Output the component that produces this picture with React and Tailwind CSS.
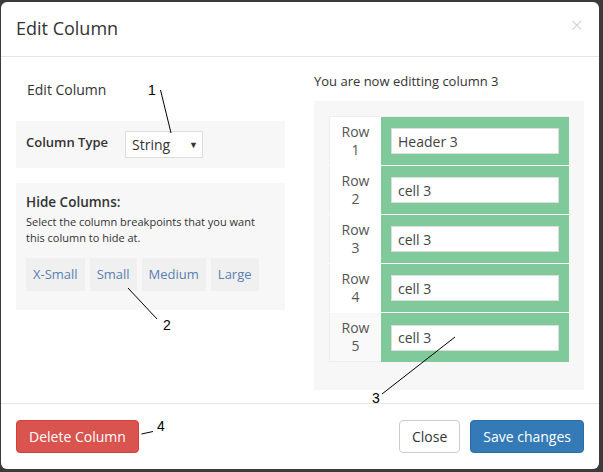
import React from "react";

const font = { fontFamily: '"Open Sans", "Noto Sans", sans-serif' };

function Row({ n, value, last }) {
  return (
    <div className={`flex h-[49px] ${last ? "" : "border-b border-white"}`}>
      <div className={`w-[52px] flex flex-col items-center justify-center text-[14px] leading-[18px] text-[#555] border-l border-[#eee] ${last ? "bg-[#f9f9f9] border-b" : "bg-white"}`}>
        <span>Row</span>
        <span>{n}</span>
      </div>
      <div className="flex-1 bg-[#80c99b] flex items-center px-[10px]">
        <div className="w-full h-[26px] bg-white border border-[#ddd] flex items-center px-[6px] text-[14px] text-[#444]">
          {value}
        </div>
      </div>
    </div>
  );
}

export default function App() {
  return (
    <div className="w-[603px] h-[472px] bg-[#3b3b3b] relative overflow-hidden" style={font}>
      <div className="absolute left-[1px] top-[2px] w-[598px] h-[467px] bg-white rounded-[6px] flex flex-col text-[#333]">
        {/* header */}
        <div className="h-[55px] border-b border-[#e5e5e5] flex items-center justify-between pl-[15px] pr-[16px] shrink-0">
          <div className="text-[18px] text-[#333] mt-[-1px]">Edit Column</div>
          <div className="text-[22px] text-[#cfcfcf] font-light leading-none mt-[-10px]">×</div>
        </div>
        {/* body */}
        <div className="flex px-[15px] gap-[29px] h-[347px] border-b border-[#e5e5e5] shrink-0">
          <div className="w-[269px] flex flex-col">
            <div className="mt-[23px] pl-[11px] text-[14px] leading-[20px] text-[#333]">Edit Column</div>
            <div className="mt-[21px] h-[47px] bg-[#f7f7f7] flex items-center pl-[10px]">
              <div className="text-[13px] font-semibold text-[#333] w-[99px] mt-[-4px]">Column Type</div>
              <div className="w-[78px] h-[27px] bg-white border border-[#ddd] flex items-center justify-between pl-[6px] pr-[4px] text-[14px] text-[#333]">
                <span>String</span>
                <span className="text-[9px] text-[#333]">▼</span>
              </div>
            </div>
            <div className="mt-[15px] h-[127px] bg-[#f7f7f7] px-[10px] pt-[9px]">
              <div className="text-[13.5px] font-semibold leading-[20px] text-[#333]">Hide Columns:</div>
              <div className="text-[11px] leading-[16px] text-[#333] whitespace-nowrap mt-[2px]">
                Select the column breakpoints that you want<br />this column to hide at.
              </div>
              <div className="flex gap-[5px] mt-[12px]">
                {["X-Small", "Small", "Medium", "Large"].map((t) => (
                  <div key={t} className="h-[33px] px-[7px] bg-[#f0f0f0] flex items-center text-[13px] text-[#5a7fb3] whitespace-nowrap">
                    {t}
                  </div>
                ))}
              </div>
            </div>
          </div>
          <div className="w-[270px] flex flex-col">
            <div className="mt-[14px] text-[13px] leading-[20px] text-[#333]">You are now editting column 3</div>
            <div className="mt-[10px] bg-[#f7f7f7] pt-[15px] pb-[28px] px-[15px]">
              <div className="flex flex-col border-t border-[#eee]">
                <Row n="1" value="Header 3" />
                <Row n="2" value="cell 3" />
                <Row n="3" value="cell 3" />
                <Row n="4" value="cell 3" />
                <Row n="5" value="cell 3" last />
              </div>
            </div>
          </div>
        </div>
        {/* footer */}
        <div className="flex items-center justify-between px-[15px] pt-[16px]">
          <div className="h-[33px] px-[12px] bg-[#d9534f] border border-[#d43f3a] rounded-[4px] flex items-center text-[14px] text-white">
            Delete Column
          </div>
          <div className="flex gap-[10px]">
            <div className="h-[33px] px-[12px] bg-white border border-[#ccc] rounded-[4px] flex items-center text-[14px] text-[#333]">
              Close
            </div>
            <div className="h-[33px] px-[12px] bg-[#337ab7] border border-[#2e6da4] rounded-[4px] flex items-center text-[14px] text-white">
              Save changes
            </div>
          </div>
        </div>
      </div>
      {/* annotations */}
      <svg className="absolute inset-0 pointer-events-none" width="603" height="472">
        <line x1="160.5" y1="90" x2="171" y2="133" stroke="#000" strokeWidth="1" />
        <line x1="128" y1="288" x2="157" y2="319" stroke="#000" strokeWidth="1" />
        <line x1="455" y1="337" x2="382" y2="394" stroke="#000" strokeWidth="1" />
        <line x1="141.5" y1="434" x2="153" y2="431.5" stroke="#000" strokeWidth="1" />
      </svg>
      <div className="absolute left-[148px] top-[82px] text-[14px] leading-[16px] text-black" style={{ fontFamily: '"Liberation Sans", sans-serif' }}>1</div>
      <div className="absolute left-[163px] top-[317px] text-[14px] leading-[16px] text-black" style={{ fontFamily: '"Liberation Sans", sans-serif' }}>2</div>
      <div className="absolute left-[372px] top-[390px] text-[14px] leading-[16px] text-black" style={{ fontFamily: '"Liberation Sans", sans-serif' }}>3</div>
      <div className="absolute left-[157px] top-[418px] text-[14px] leading-[16px] text-black" style={{ fontFamily: '"Liberation Sans", sans-serif' }}>4</div>
    </div>
  );
}
